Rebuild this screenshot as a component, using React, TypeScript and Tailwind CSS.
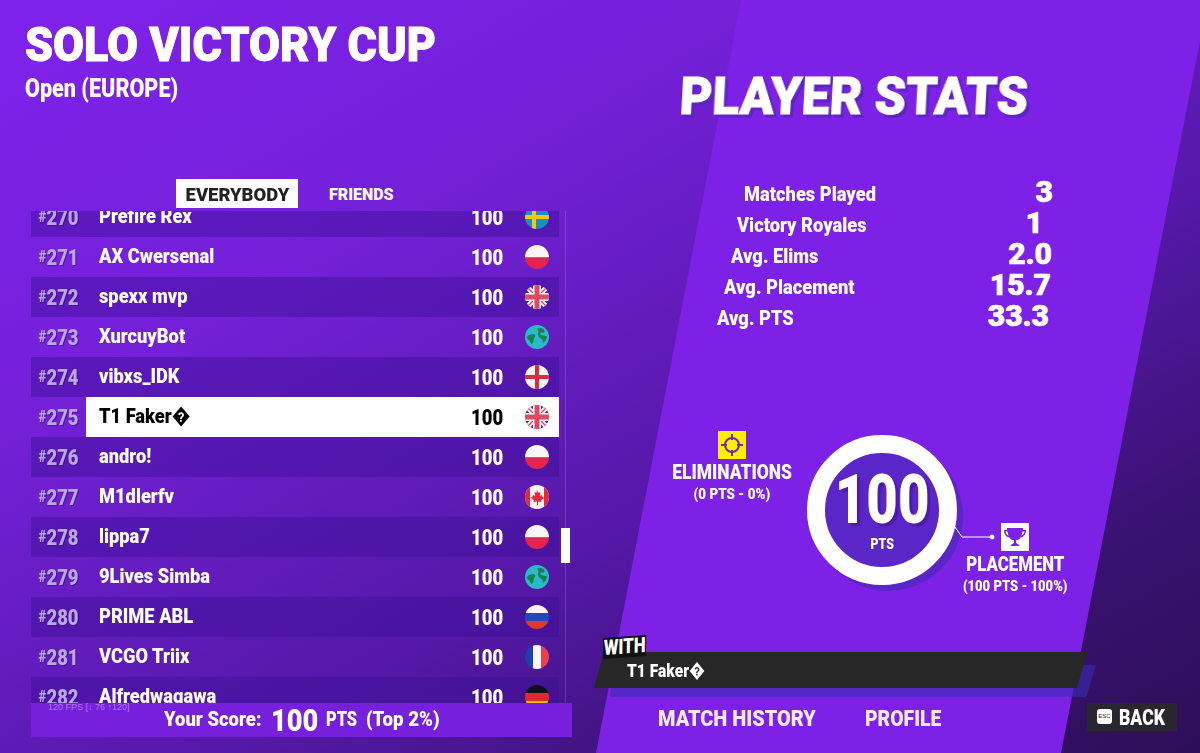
import React from "react";

const HEAVY = "font-['Roboto',sans-serif] font-black";
const SQ = "inline-block whitespace-nowrap origin-left";
const SQC = "inline-block whitespace-nowrap origin-center";
const SQR = "inline-block whitespace-nowrap origin-right";

function Flag({ kind }: { kind: string }) {
  const parts: Record<string, React.ReactNode> = {
    se: (<><rect width="24" height="24" fill="#1b8fc0" /><rect x="7" width="4" height="24" fill="#f5c518" /><rect y="10" width="24" height="4" fill="#f5c518" /></>),
    pl: (<><rect width="24" height="12.5" fill="#f8f5f7" /><rect y="12.5" width="24" height="12" fill="#e3254d" /></>),
    gb: (<><rect width="24" height="24" fill="#2b3a86" /><path d="M0 0 24 24M24 0 0 24" stroke="#f8f5f7" strokeWidth="5" /><path d="M0 0 24 24M24 0 0 24" stroke="#df4a63" strokeWidth="1.400" /><rect x="8" width="8" height="24" fill="#f8f5f7" /><rect y="8" width="24" height="8" fill="#f8f5f7" /><rect x="9.500" width="5" height="24" fill="#df4a63" /><rect y="9.500" width="24" height="5" fill="#df4a63" /></>),
    w: (<><rect width="24" height="24" fill="#2cb8c6" /><path d="M2 12c1-2 4-3 7-3 2 1 1 3 0 4-1 2 0 4-2 6-2-1-2-3-3-4-1 0-2-1-2-3ZM12 4c3-2 6-1 8 2l-2 2-2-1-1 2c1 2 6 1 7 3-1 3-2 5-4 6 0-3-1-4-3-5-2-1-2-3-2-5 1-1 1-2-1-4Z" fill="#14804e" /></>),
    en: (<><rect width="24" height="24" fill="#f8f5f7" /><rect x="10" width="4" height="24" fill="#df2a44" /><rect y="10" width="24" height="4" fill="#df2a44" /></>),
    ca: (<><rect width="24" height="24" fill="#f8f5f7" /><rect width="5" height="24" fill="#e32a3c" /><rect x="19" width="5" height="24" fill="#e32a3c" /><path d="M12 5l1.500 3 2-1-.7 4 2.200-1 .5 2 2 .5-3.500 3 .5 1.500-3.500-.5V20h-1v-3.500l-3.500.5.500-1.500-3.500-3 2-.5.500-2 2.200 1-.7-4 2 1Z" fill="#e32a3c" /></>),
    ru: (<><rect width="24" height="8" fill="#f8f5f7" /><rect y="8" width="24" height="8" fill="#2348b8" /><rect y="16" width="24" height="8" fill="#df3a2a" /></>),
    fr: (<><rect width="8" height="24" fill="#1f3fb0" /><rect x="8" width="8" height="24" fill="#f8f5f7" /><rect x="16" width="8" height="24" fill="#e8404f" /></>),
    de: (<><rect width="24" height="8" fill="#111" /><rect y="8" width="24" height="8" fill="#df2a2a" /><rect y="16" width="24" height="8" fill="#f5b818" /></>),
  };
  return (
    <svg viewBox="0 0 24 24" className="h-6 w-6 rounded-full">
      {parts[kind]}
    </svg>
  );
}

const rows: [string, string, string][] = [
  ["270", "Prefire Rex", "se"],
  ["271", "AX Cwersenal", "pl"],
  ["272", "spexx mvp", "gb"],
  ["273", "XurcuyBot", "w"],
  ["274", "vibxs_IDK", "en"],
  ["275", "T1 Faker\uFFFD", "gb"],
  ["276", "andro!", "pl"],
  ["277", "M1dlerfv", "ca"],
  ["278", "lippa7", "pl"],
  ["279", "9Lives Simba", "w"],
  ["280", "PRIME ABL", "ru"],
  ["281", "VCGO Triix", "fr"],
  ["282", "Alfredwagawa", "de"],
];

const stats: [string, string, string, string][] = [
  ["Matches Played", "3", "ml-[144px]", "mr-[147px]"],
  ["Victory Royales", "1", "ml-[137px]", "mr-[157px]"],
  ["Avg. Elims", "2.0", "ml-[131px]", "mr-[148px]"],
  ["Avg. Placement", "15.7", "ml-[124px]", "mr-[149px]"],
  ["Avg. PTS", "33.3", "ml-[117px]", "mr-[151px]"],
];

function Row({ rank, name, flag, index }: { rank: string; name: string; flag: string; index: number }) {
  const me = rank === "275";
  return (
    <div className={`flex h-10 w-[528px] items-center ${index % 2 === 0 ? "bg-[#3c0f96]/45" : ""} ${HEAVY}`}>
      <div className="w-[46px] text-right text-[22px] text-[#bba6e6] drop-shadow-[1px_1px_0_rgba(40,10,100,0.5)]">
        <span className={`${SQR} scale-x-[0.84]`}><span className="text-[16px] align-[3px]">#</span>{rank}</span>
      </div>
      <div className={`ml-[9px] flex h-full flex-1 items-center pl-[13px] pr-[10px] text-[21px] ${me ? "bg-white text-black" : "text-white"}`}>
        <span className="flex-1"><span className={`${SQ} scale-x-[0.87]`}>{name}</span></span>
        <span className="w-[54px] text-[22px]"><span className={`${SQ} scale-x-[0.84]`}>100</span></span>
        <span className="flex w-[24px] items-center"><Flag kind={flag} /></span>
      </div>
    </div>
  );
}

export default function App() {
  return (
    <div className="relative flex h-[753px] w-[1200px] overflow-hidden bg-[linear-gradient(150deg,#7f22ec_0%,#7420d8_30%,#5418a6_62%,#3a1272_82%,#2c0f58_100%)]">
      <div className="absolute inset-0 bg-[#7c21e5] [clip-path:polygon(741px_0,1208px_0,1061px_753px,596px_753px)]" />

      <div className="relative flex w-[600px] flex-col">
        <h1 className={`ml-[25px] mt-[21px] h-[48px] text-[48px] leading-[48px] text-white [-webkit-text-stroke:1px_white] ${HEAVY}`}>
          <span className={`${SQ} scale-x-[0.935]`}>SOLO VICTORY CUP</span>
        </h1>
        <p className={`ml-[25px] mt-[7px] h-[24px] text-[26px] leading-[24px] text-white ${HEAVY}`}>
          <span className={`${SQ} scale-x-[0.83]`}>Open (EUROPE)</span>
        </p>
        <div className={`mt-[79px] flex h-[29px] items-center ${HEAVY}`}>
          <div className="ml-[176px] flex h-full w-[122px] items-center justify-center bg-white pt-[3px] text-[19px] text-[#222]">
            <span className={`${SQC} scale-x-[0.97]`}>EVERYBODY</span>
          </div>
          <div className="ml-[31px] pt-[3px] text-[16px] text-white"><span className={SQ}>FRIENDS</span></div>
        </div>
        <div className="relative ml-[31px] mt-[3px] h-[492px] w-[541px] overflow-hidden">
          <div className="-mt-[14px]">
            {rows.map((r, i) => (
              <Row key={r[0]} rank={r[0]} name={r[1]} flag={r[2]} index={i} />
            ))}
          </div>
          <div className="absolute bottom-0 left-[534px] top-0 w-px bg-white/15" />
          <div className="absolute left-[530px] top-[317px] h-[35px] w-[9px] bg-white" />
        </div>
        <div className={`relative ml-[31px] flex h-[34px] w-[541px] items-center bg-[#7620dc] text-[21px] text-white ${HEAVY}`}>
          <span className="absolute -top-[2px] left-[17px] font-['Liberation_Sans',sans-serif] text-[9px] font-normal text-white/40">120 FPS [↓ 76 ↑120]</span>
          <span className="ml-[133px] w-[107px]"><span className={`${SQ} scale-x-[0.88]`}>Your Score:</span></span>
          <span className="w-[55px] text-[32px]"><span className={`${SQ} scale-x-[0.85]`}>100</span></span>
          <span className="w-[40px]"><span className={`${SQ} scale-x-[0.78]`}>PTS</span></span>
          <span><span className={`${SQ} scale-x-[0.89]`}>(Top 2%)</span></span>
        </div>
      </div>

      <div className="relative flex w-[600px] flex-col">
        <h2 className={`ml-[80px] mt-[70px] h-[54px] -skew-x-3 text-[52px] leading-[54px] text-white drop-shadow-[3px_3px_0_#5a25c0] [-webkit-text-stroke:1px_white] ${HEAVY}`}>
          <span className={`${SQ} scale-x-[0.96]`}>PLAYER STATS</span>
        </h2>
        <div className={`mt-[54px] flex flex-col text-white ${HEAVY}`}>
          {stats.map(([label, val, ml, mr]) => (
            <div key={label} className="flex h-[31px] items-center justify-between">
              <span className={`${ml} text-[20px]`}><span className={`${SQ} scale-x-[0.915]`}>{label}</span></span>
              <span className={`${mr} -mt-[4px] text-[30px] [-webkit-text-stroke:0.6px_white]`}>{val}</span>
            </div>
          ))}
        </div>
        <div className="relative mt-[98px] flex h-[164px] items-start">
          <div className={`ml-[72px] flex w-[120px] flex-col items-center text-white ${HEAVY}`}>
            <div className="flex h-7 w-7 items-center justify-center bg-[#ffee00]">
              <svg viewBox="0 0 28 28" className="h-7 w-7" fill="none" stroke="#6a2cc0" strokeWidth="2">
                <circle cx="14" cy="14" r="7" />
                <path d="M14 3v6M14 19v6M3 14h6M19 14h6" />
              </svg>
            </div>
            <div className="mt-[1px] text-[21px] leading-[25px]"><span className={`${SQC} scale-x-[0.83]`}>ELIMINATIONS</span></div>
            <div className="text-[14px] leading-[19px]"><span className={`${SQC} scale-x-[0.96]`}>(0 PTS - 0%)</span></div>
          </div>
          <div className="relative ml-[15px] mt-[4px] flex h-[150px] w-[150px] flex-col items-center rounded-full border-[18px] border-white bg-[#5a26c8] text-white shadow-[6px_6px_0_#5a26c8]">
            <span className={`mt-[12px] text-[68px] leading-[70px] drop-shadow-[3px_3px_0_#4a1ca8] ${HEAVY}`}>
              <span className={`${SQC} scale-x-[0.8]`}>100</span>
            </span>
            <span className={`text-[15px] leading-[18px] ${HEAVY}`}><span className={`${SQC} scale-x-[0.82]`}>PTS</span></span>
          </div>
          <svg viewBox="0 0 50 30" className="absolute left-[353px] top-[88px] h-[30px] w-[50px]" fill="none" stroke="white" strokeWidth="1">
            <path d="M2 8 9 18H38" />
            <circle cx="39" cy="18" r="2" fill="white" />
          </svg>
          <div className={`-ml-[2px] mt-[92px] flex w-[120px] flex-col items-center text-white ${HEAVY}`}>
            <div className="flex h-7 w-7 items-center justify-center bg-white">
              <svg viewBox="0 0 28 28" className="h-7 w-7" fill="#7c21e5">
                <path d="M6 5h16v2h3c0 4-2 7-5.500 7.500-1 1.800-2.300 2.500-4.500 2.800v2.700c1 1 3 1 3.500 3h-9c.5-2 2.500-2 3.500-3v-2.700c-2.200-.3-3.500-1-4.500-2.800C5 14 3 11 3 7h3v-2ZM4.500 8.500c.3 1.800 1.300 3.500 3 4.200L6.500 8.500ZM23.500 8.500h-2l-1 4.200c1.700-.7 2.700-2.400 3-4.200Z" fillRule="evenodd" />
              </svg>
            </div>
            <div className="mt-[1px] text-[21px] leading-[25px]"><span className={`${SQC} scale-x-[0.8]`}>PLACEMENT</span></div>
            <div className="text-[14px] leading-[19px]"><span className={`${SQC} scale-x-[0.93]`}>(100 PTS - 100%)</span></div>
          </div>
        </div>
        <div className="relative mt-[57px] h-[36px] w-[510px] -translate-x-[6px]">
          <div className="absolute left-[16px] top-[13px] h-[32px] w-[486px] bg-[#3a2bb0]/60 [clip-path:polygon(4px_0,100%_0,98%_100%,0_100%)]" />
          <div className={`absolute inset-0 mr-[17px] flex items-center bg-[#272727] pl-[33px] pt-[3px] text-[19px] text-white [clip-path:polygon(10px_0,100%_0,98%_100%,0_100%)] ${HEAVY}`}>
            <span className={`${SQ} scale-x-[0.82]`}>T1 Faker{"\uFFFD"}</span>
          </div>
          <div className={`absolute -top-[14px] left-[9px] origin-left -rotate-[4deg] -skew-x-6 scale-x-[0.8] bg-[#111] px-[1px] text-[21px] leading-[21px] text-white ${HEAVY}`}>WITH</div>
        </div>
        <div className={`mt-[13px] flex h-[31px] items-center pt-[3px] text-[22px] text-[#f3eaff] ${HEAVY}`}>
          <span className="ml-[58px] w-[207px]"><span className={`${SQ} scale-x-[0.905]`}>MATCH HISTORY</span></span>
          <span><span className={`${SQ} scale-x-[0.88]`}>PROFILE</span></span>
          <div className="ml-auto mr-[23px] -mt-[3px] flex h-full w-[90px] items-center bg-[#2a2630] pl-[10px] text-white">
            <span className="flex h-[15px] w-[15px] items-center justify-center rounded-[3px] bg-white font-['Liberation_Sans',sans-serif] text-[6px] font-normal text-[#222]">ESC</span>
            <span className="ml-[7px] pt-[2px]"><span className={`${SQ} scale-x-[0.8]`}>BACK</span></span>
          </div>
        </div>
      </div>
    </div>
  );
}
